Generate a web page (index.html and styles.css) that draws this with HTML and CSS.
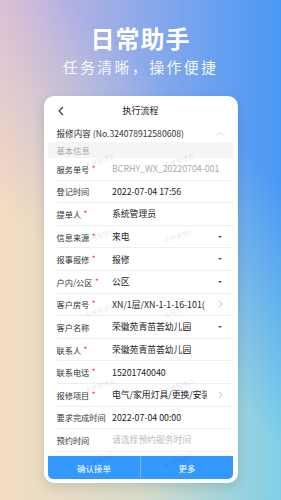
FILE: index.html
```html
<html lang="zh-CN">
<head>
    <meta charset="UTF-8">
    <meta name="viewport" content="width=device-width, initial-scale=1.0">
    <title>日常助手</title>
    <link rel="stylesheet" href="styles.css">
</head>
<body>
    <div class="hero">
        <h1>日常助手</h1>
        <p>任务清晰，操作便捷</p>
    </div>
    <div class="card">
        <div class="topbar">
            <svg class="back" width="6" height="10" viewBox="0 0 6 10"><path d="M5 1 1 5l4 4" fill="none" stroke="#333" stroke-width="1.1"/></svg>
            <span>执行流程</span>
        </div>
        <div class="section">
            <span>报修内容 (No.324078912580608)</span>
            <svg width="8" height="5" viewBox="0 0 8 5"><path d="M1 4.5 4 1.5l3 3" fill="none" stroke="#c8c8c8" stroke-width="0.9"/></svg>
        </div>
        <div class="band">基本信息</div>
        <div class="row"><span class="label">服务单号<i>*</i></span><span class="value muted">BCRHY_WX_20220704-001</span></div>
        <div class="row"><span class="label">登记时间</span><span class="value">2022-07-04 17:56</span></div>
        <div class="row"><span class="label">提单人<i>*</i></span><span class="value">系统管理员</span></div>
        <div class="row"><span class="label">信息来源<i>*</i></span><span class="value">来电</span><span class="icon"><b class="drop"></b></span></div>
        <div class="row"><span class="label">报事报修<i>*</i></span><span class="value">报修</span><span class="icon"><b class="drop"></b></span></div>
        <div class="row"><span class="label">户内/公区<i>*</i></span><span class="value">公区</span><span class="icon"><b class="drop"></b></span></div>
        <div class="row"><span class="label">客户房号<i>*</i></span><span class="value">XN/1层/XN-1-1-16-101(Ⅱ</span><span class="icon"><svg width="5" height="8" viewBox="0 0 5 8"><path d="M1 1l3 3-3 3" fill="none" stroke="#bbb" stroke-width="0.9"/></svg></span></div>
        <div class="row"><span class="label">客户名称</span><span class="value">荣徽苑青苗荟幼儿园</span><span class="icon"><b class="drop"></b></span></div>
        <div class="row"><span class="label">联系人<i>*</i></span><span class="value">荣徽苑青苗荟幼儿园</span></div>
        <div class="row"><span class="label">联系电话<i>*</i></span><span class="value">15201740040</span></div>
        <div class="row"><span class="label">报修项目<i>*</i></span><span class="value">电气/家用灯具/更换/安装泳池灯</span><span class="icon"><svg width="5" height="8" viewBox="0 0 5 8"><path d="M1 1l3 3-3 3" fill="none" stroke="#bbb" stroke-width="0.9"/></svg></span></div>
        <div class="row"><span class="label">要求完成时间</span><span class="value">2022-07-04 00:00</span></div>
        <div class="row"><span class="label">预约时间</span><span class="value hint">请选择预约服务时间</span></div>
        <div class="actions">
            <button>确认接单</button>
            <button>更多</button>
        </div>
        <div class="watermark">
            <span>系统管理员</span><span>系统管理员</span>
            <span>系统管理员</span><span>系统管理员</span>
            <span>系统管理员</span><span>系统管理员</span>
            <span>系统管理员</span><span>系统管理员</span>
            <span>系统管理员</span><span>系统管理员</span>
        </div>
    </div>
</body>
</html>
```

FILE: styles.css
```css
body {
    margin: 0;
    height: 500px;
    overflow: hidden;
    position: relative;
    font-family: "Noto Sans CJK SC", "Noto Sans", sans-serif;
    background: linear-gradient(to right, #f4dcc0, #d7dccb 50%, #7fcfe6);
}
body::before {
    content: "";
    position: absolute;
    top: 0;
    left: 0;
    right: 0;
    bottom: 0;
    background: linear-gradient(to right, #d6b8da, #8eaaea 50%, #4a98f5);
    -webkit-mask-image: linear-gradient(220deg, #000 25%, transparent 60%);
    mask-image: linear-gradient(220deg, #000 25%, transparent 60%);
}
.hero {
    position: relative;
    padding-top: 22px;
    text-align: center;
    color: #fff;
}
.hero h1 {
    margin: 0;
    font-size: 24px;
    line-height: 32px;
    letter-spacing: 1px;
    font-weight: 700;
}
.hero p {
    margin: 3px 0 0;
    font-size: 15px;
    line-height: 20px;
    letter-spacing: 2.3px;
    color: rgba(255, 255, 255, 0.92);
}
.card {
    position: relative;
    width: 194px;
    margin: 19px auto 0;
    padding: 0 4.5px 4px;
    box-sizing: border-box;
    background: #fff;
    border-radius: 10px;
    box-shadow: 0 4px 12px rgba(0, 0, 0, 0.12);
    font-size: 8.4px;
    color: #333;
}
.topbar {
    position: relative;
    height: 28px;
    display: flex;
    align-items: center;
    justify-content: center;
    font-size: 9px;
    color: #222;
}
.back {
    position: absolute;
    left: 9.5px;
    top: 10px;
}
.section {
    height: 18px;
    display: flex;
    align-items: center;
    justify-content: space-between;
    padding: 0 9px 0 8.5px;
    font-size: 8.6px;
    color: #333;
}
.band {
    height: 16px;
    line-height: 16px;
    padding-left: 8.5px;
    background: #f5f5f5;
    color: #aaa;
}
.row {
    height: 22.6px;
    box-sizing: border-box;
    margin-left: 8.5px;
    display: flex;
    align-items: center;
    border-bottom: 1px solid #eee;
}
.row:first-of-type {
    height: 23.2px;
}
.label {
    width: 55.5px;
    flex: none;
    white-space: nowrap;
    font-size: 8.2px;
    color: #333;
}
.label i {
    font-style: normal;
    color: #f44;
    margin-left: 2.5px;
    position: relative;
    top: -1px;
}
.value {
    flex: 1;
    overflow: hidden;
    white-space: nowrap;
    font-size: 8.8px;
    color: #222;
}
.value.muted {
    color: #aaa;
}
.value.hint {
    color: #bbb;
}
.icon {
    width: 26px;
    flex: none;
    display: flex;
    align-items: center;
    justify-content: center;
}
.drop {
    width: 0;
    height: 0;
    border-left: 2px solid transparent;
    border-right: 2px solid transparent;
    border-top: 2.5px solid #555;
}
.actions {
    display: flex;
    margin-top: 4.6px;
    height: 23px;
    border-radius: 0 0 5px 5px;
    overflow: hidden;
}
.actions button {
    flex: 1;
    border: none;
    margin: 0;
    padding: 0;
    background: #3399ff;
    color: #fff;
    font-family: inherit;
    font-size: 8.5px;
}
.actions button + button {
    border-left: 1px solid rgba(255, 255, 255, 0.3);
}
.watermark {
    position: absolute;
    top: 61px;
    left: 41px;
    display: grid;
    grid-template-columns: 30px 30px;
    column-gap: 49px;
    row-gap: 67px;
    pointer-events: none;
}
.watermark span {
    font-size: 6px;
    line-height: 8px;
    white-space: nowrap;
    color: rgba(0, 0, 0, 0.13);
    transform: rotate(-18deg);
}
```
